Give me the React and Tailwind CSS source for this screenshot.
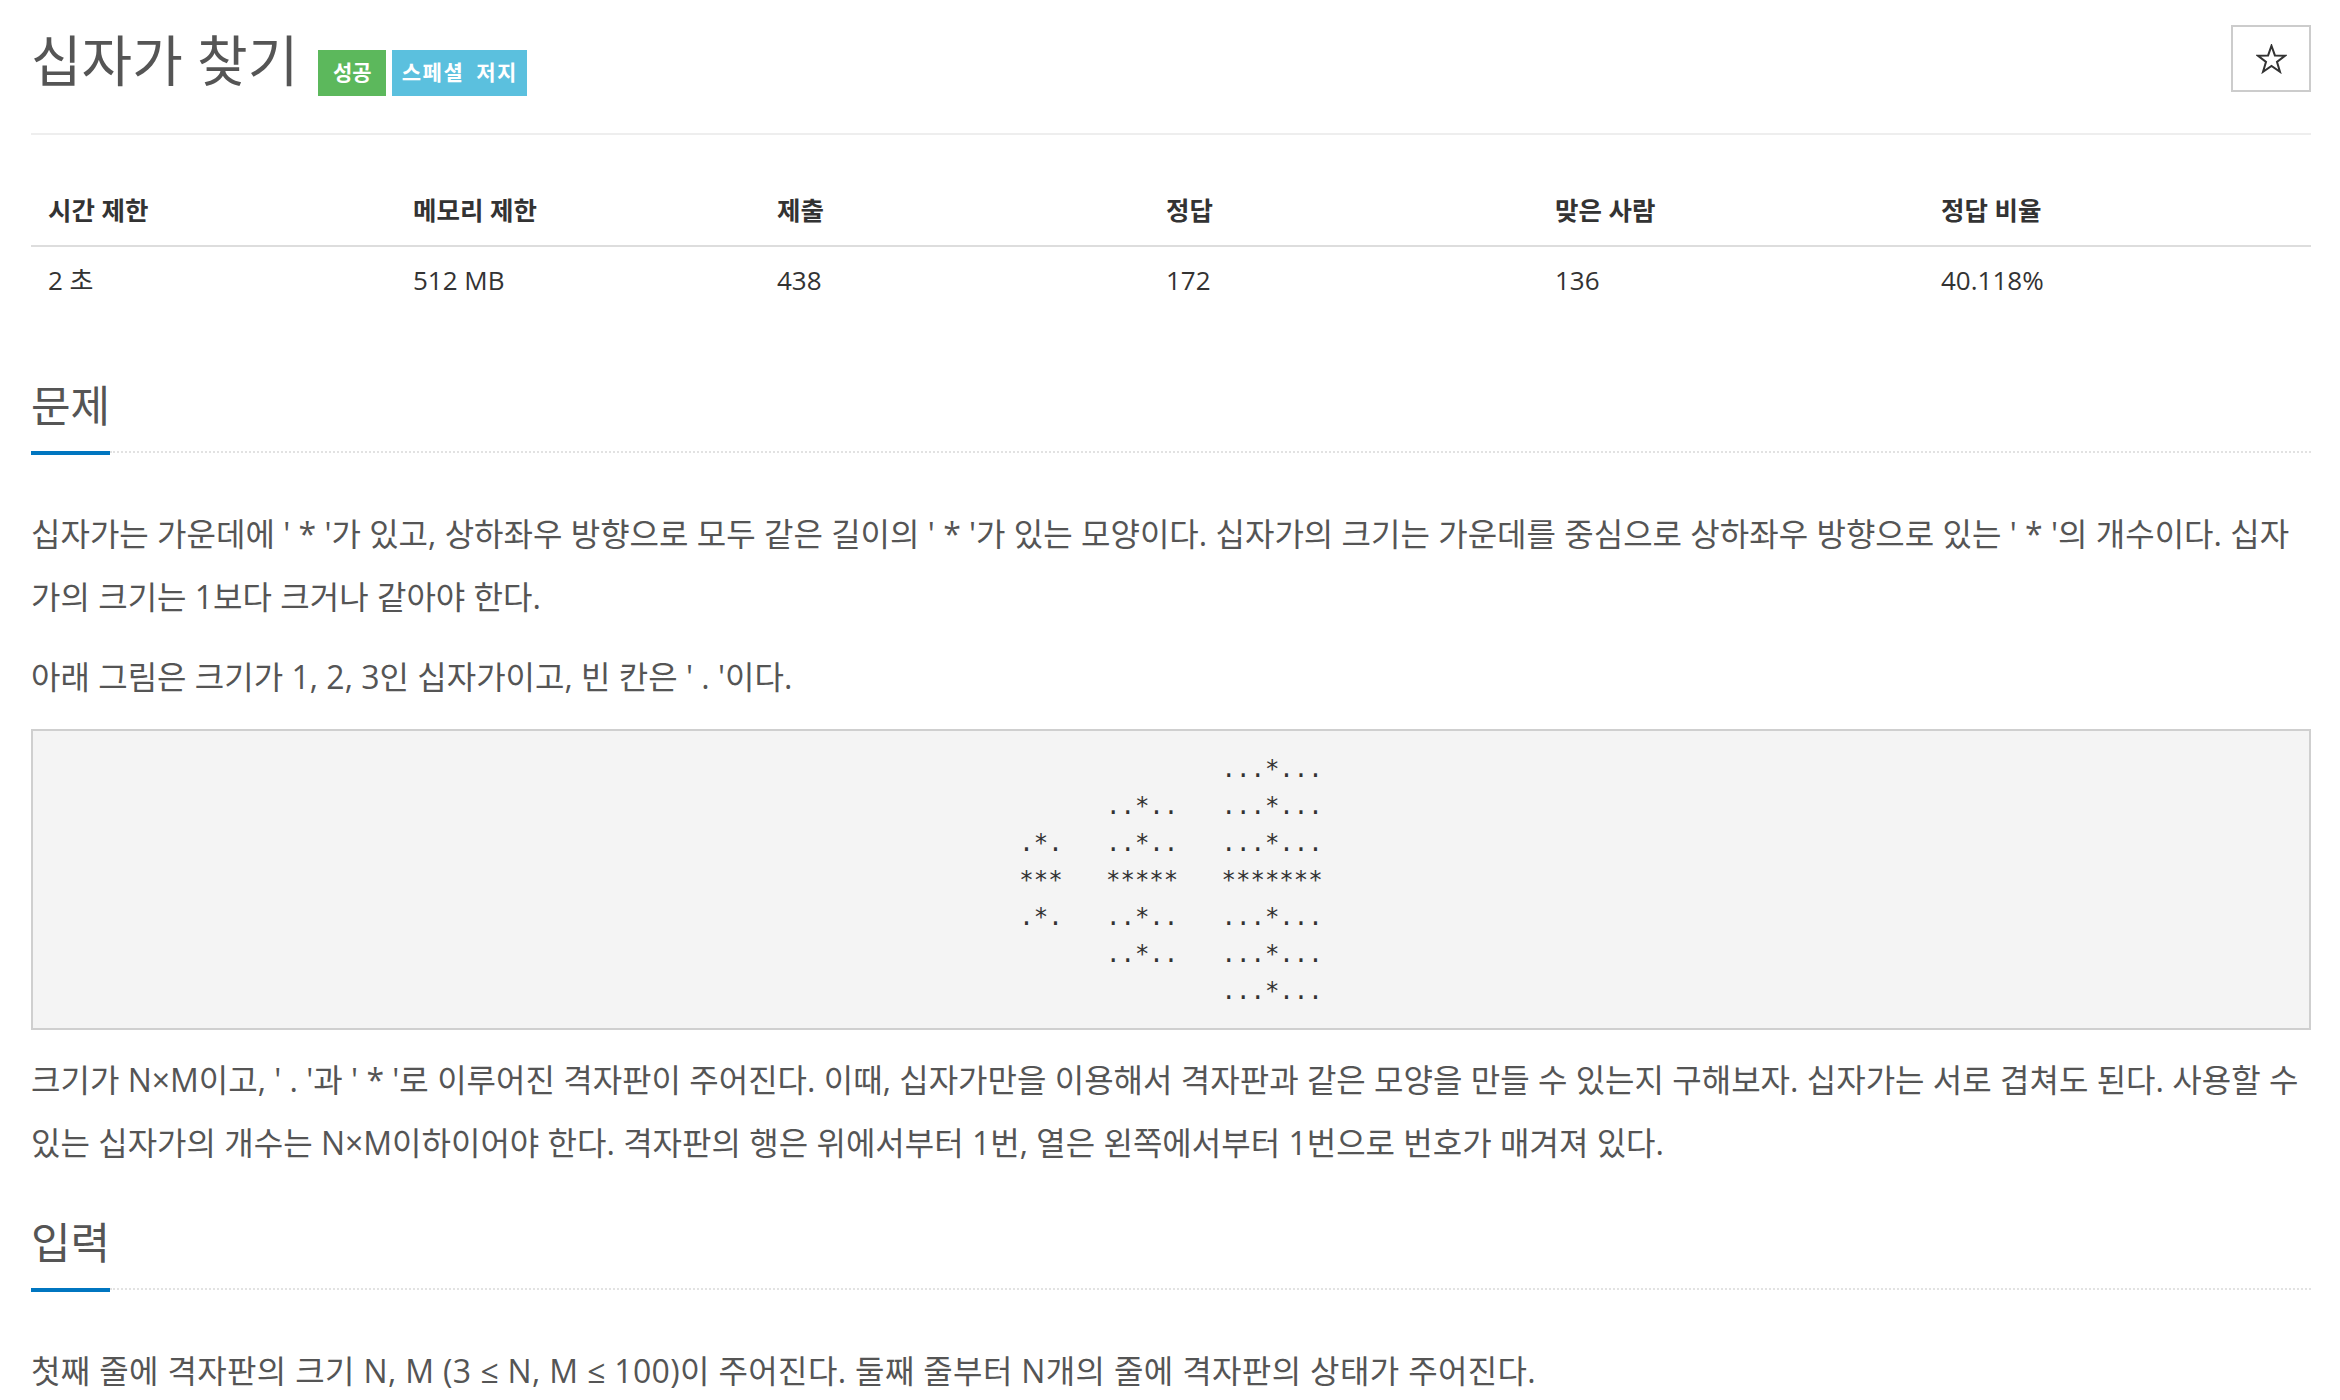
import React from 'react';

const stats = [
  { label: '시간 제한', value: '2 초', w: 'w-[365px]' },
  { label: '메모리 제한', value: '512 MB', w: 'w-[364px]' },
  { label: '제출', value: '438', w: 'w-[389px]' },
  { label: '정답', value: '172', w: 'w-[389px]' },
  { label: '맞은 사람', value: '136', w: 'w-[386px]' },
  { label: '정답 비율', value: '40.118%', w: 'w-[387px]' },
];

const crossRows = [
  '              ...*...',
  '      ..*..   ...*...',
  '.*.   ..*..   ...*...',
  '***   *****   *******',
  '.*.   ..*..   ...*...',
  '      ..*..   ...*...',
  '              ...*...',
];

function SectionTitle({ title, className }) {
  return (
    <div className={`flex items-end ${className}`}>
      <h2 className="text-[43px] leading-[46px] font-normal text-[#555] pb-[22px] border-b-4 border-[#0076c0] whitespace-nowrap">
        {title}
      </h2>
      <div className="flex-1 border-b-2 border-dotted border-[#e2e2e2] mb-[2px]" />
    </div>
  );
}

function App() {
  return (
    <div className="min-h-screen bg-white pl-[31px] pr-[29px] font-['Open_Sans','Noto_Sans_CJK_KR',sans-serif]">

      {/* 제목 */}
      <div className="h-[135px] pt-[25px] flex justify-between items-start border-b-2 border-[#eee]">
        <div className="flex items-start">
          <h1 className="mt-[5px] text-[55px] leading-[60px] font-normal text-[#555] whitespace-nowrap">십자가 찾기</h1>
          <div className="flex gap-[6px] mt-[25px] ml-[20px]">
            <span className="h-[46px] w-[68px] flex items-center justify-center bg-[#5cb85c] text-white font-bold text-[21px]">성공</span>
            <span className="h-[46px] w-[135px] flex items-center justify-center bg-[#5bc0de] text-white font-bold text-[21px] tracking-[1.5px] [word-spacing:5px]">스페셜 저지</span>
          </div>
        </div>
        <button className="w-[80px] h-[67px] border-2 border-[#ccc] bg-white flex items-center justify-center">
          <svg width="31" height="30" viewBox="0 0 28 27" fill="none" stroke="#333" strokeWidth="1.8" strokeLinejoin="miter">
            <polygon points="14,1.5 17.06,10.29 26.36,10.48 18.95,16.11 21.64,25.02 14,19.7 6.36,25.02 9.05,16.11 1.64,10.48 10.94,10.29" />
          </svg>
        </button>
      </div>

      {/* 통계 */}
      <div className="mt-[40px] text-[#333]">
        <div className="flex h-[72px] border-b-2 border-[#ddd]">
          {stats.map((s) => (
            <div key={s.label} className={`${s.w} pl-[17px] flex items-center text-[25.5px] font-bold`}>{s.label}</div>
          ))}
        </div>
        <div className="flex h-[66px]">
          {stats.map((s) => (
            <div key={s.label} className={`${s.w} pl-[17px] flex items-center text-[26px]`}>{s.value}</div>
          ))}
        </div>
      </div>

      {/* 문제 */}
      <SectionTitle title="문제" className="mt-[70px]" />
      <div className="mt-[47px] text-[32px] leading-[63px] text-[#555]">
        <p>
          십자가는 가운데에 ' * '가 있고, 상하좌우 방향으로 모두 같은 길이의 ' * '가 있는 모양이다. 십자가의 크기는 가운데를 중심으로 상하좌우 방향으로 있는 ' * '의 개수이다. 십자<br />
          가의 크기는 1보다 크거나 같아야 한다.
        </p>
        <p className="mt-[17px]">아래 그림은 크기가 1, 2, 3인 십자가이고, 빈 칸은 ' . '이다.</p>

        <div className="mt-[21px] h-[301px] border-2 border-[#cfcfcf] bg-[#f4f4f4] pt-[20px] flex justify-center">
          <div className="font-['DejaVu_Sans_Mono',monospace] text-[24px] leading-[37px] text-[#333] whitespace-pre">
            {crossRows.map((row, idx) => (
              <div key={idx}>{row}</div>
            ))}
          </div>
        </div>

        <p className="mt-[18px]">
          크기가 N×M이고, ' . '과 ' * '로 이루어진 격자판이 주어진다. 이때, 십자가만을 이용해서 격자판과 같은 모양을 만들 수 있는지 구해보자. 십자가는 서로 겹쳐도 된다. 사용할 수<br />
          있는 십자가의 개수는 N×M이하이어야 한다. 격자판의 행은 위에서부터 1번, 열은 왼쪽에서부터 1번으로 번호가 매겨져 있다.
        </p>
      </div>

      {/* 입력 */}
      <SectionTitle title="입력" className="mt-[46px]" />
      <div className="mt-[47px] text-[32px] leading-[63px] text-[#555]">
        <p className="tracking-[0.35px]">첫째 줄에 격자판의 크기 N, M (3 ≤ N, M ≤ 100)이 주어진다. 둘째 줄부터 N개의 줄에 격자판의 상태가 주어진다.</p>
      </div>

    </div>
  );
}

export default App;
